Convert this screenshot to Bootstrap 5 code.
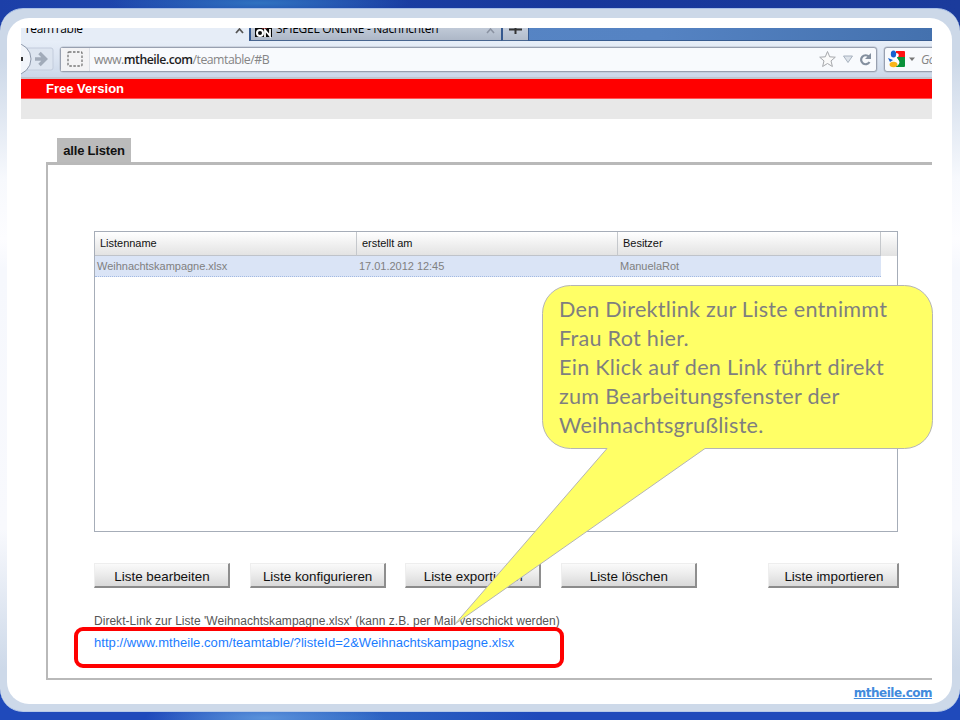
<!DOCTYPE html>
<html lang="de">
<head>
<meta charset="utf-8">
<meta name="viewport" content="width=device-width, initial-scale=1">
<title>TeamTable</title>
<link href="https://cdn.jsdelivr.net/npm/bootstrap@5.3.0/dist/css/bootstrap.min.css" rel="stylesheet">
<style>
body{width:960px;height:720px;font-family:"Liberation Sans",Arial,sans-serif;color:#111}
.slide{width:960px;height:720px;padding:8px 0;background:
 radial-gradient(ellipse 150px 14px at 260px 3px,#2f72c0,transparent),
 radial-gradient(ellipse 120px 20px at 265px 718px,#5b93db,transparent),
 radial-gradient(ellipse 190px 24px at 350px 718px,#2f68c4,transparent),
 linear-gradient(90deg,#1c3fa8,#1e46ac 15%,#17379b 60%,#1b3b9c) 0 0/960px 40px no-repeat,#1f4abb}
.frame{height:704px;border-radius:23px;padding:9px 8px 8px 7px;border-top:1px solid #a9c0e6;border-bottom:1px solid #b5c9e8;
 background:linear-gradient(#ccd8e8 0,#ccd8e8 50px,#f7f9fd 170px,#fdfdff 230px,#f6f8fd 260px,#f8f9fd 520px,#cdd9e9 660px)}
.sheet{height:686px;border-radius:22px;background:#fff;padding:10px 20px 0 14px}
.shot{width:911px;height:652px;overflow:hidden}
.ui{font-family:"Open Sans","Noto Sans",sans-serif}
.tabs{height:13px;font-size:12px;line-height:14px;background:linear-gradient(90deg,#5887c6,#5583c3 70%,#4471ae)}
.tabs svg,.bar svg{flex:none;display:block}
.tabs span{margin-top:-6px;white-space:nowrap;letter-spacing:-.3px;color:#000}
.t1{width:228px;background:#e6edf7;padding-left:3px;padding-right:5px}
.t2{width:252px;background:linear-gradient(#c0c9d7,#adb7c7);border-left:2px solid #35588e;border-bottom:1px solid #48658f;padding-left:4px;padding-right:6px}
.t3{width:27px;background:linear-gradient(#c3ccda,#b2bccb);border-left:2px solid #35588e;border-bottom:1px solid #48658f}
.t4{border-left:1px solid #35588e;border-bottom:1px solid #385c91}
.bar{height:38px;background:linear-gradient(#e7eef8,#dbe4f1 50%,#ccd8e9);border-bottom:2px solid #c2c5cd}
.field{height:25px;background:#f8fafd;border:1px solid #98a0b0;border-radius:3px;box-shadow:0 0 0 .5px #b7bfcc}
.nav-l{width:39px;height:31px}
.addr{width:817px}
.ident{width:29px;background:#f3f3f5;border-right:1px solid #dde0e6}
.url{font-size:12.3px;letter-spacing:-.5px;color:#858585;padding:2px 0 0 4px}
.url b{color:#1d1d1d;font-weight:600}
.search{width:70px;margin-left:7px;margin-right:-22px}
.free{height:20px;background:#f00;border-bottom:1px solid #f55;color:#fff;font-size:13px;font-weight:700;line-height:20px;padding-left:25px;letter-spacing:0}
.strip{height:20px;background:#e8e8e8}
.app{padding:19px 0 0 25px}
.tabname{width:74px;height:24px;margin-left:11px;background:#bbb;font-weight:700;font-size:13px;line-height:25px;letter-spacing:-.2px;text-align:center}
.panel{height:518px;border:solid #b9b9b9;border-width:3px 0 2px 2px;padding:66px 0 0 46px}
.grid{width:804px;height:301px;border:1px solid #a6adb8;font-size:11px}
.ghead{height:24px;background:linear-gradient(#fff,#f0f0f0 50%,#e2e2e2);line-height:23px;color:#111}
.ghead div{border-right:1px solid #c5c8cc;border-bottom:1px solid #bfc3ca;padding-left:5px}
.grow{width:786px;height:22px;background:#dae4f6;border-bottom:1px dotted #a3bae3;border-top:1px dotted #a9bbdb;line-height:20px;color:#808080;margin-top:-1px}
.grow div{padding-left:2px}
.c1{width:262px}.c2{width:261px}.c3{width:263px}
.c1,.c2,.c3{letter-spacing:-.02px}
.acts{margin-top:31px;gap:19.6px}
.abtn{width:136px;height:25px;border-radius:0;border:solid;border-width:1px 2px 2px 1px;border-color:#eee #8e8e8e #8b8b8b #eee;background:linear-gradient(#fafafa,#eee 40%,#d9d9d9);font-size:13.4px;color:#111;padding:0 0 0 1px;line-height:26px}
.acts .imp{width:131px;margin-left:52px}
.direct{font-size:12px;line-height:15px;color:#555;margin-top:26px;letter-spacing:.03px}
.dlink{font-size:13px;line-height:15px;color:#1a7cff;text-decoration:none;margin-top:6px;letter-spacing:.05px}
.hl{left:74px;top:627px;width:490px;height:41px;border:4px solid #f00;border-radius:9px}
.say{left:559px;top:295px;font:21.6px/29px Lato,"Open Sans",sans-serif;letter-spacing:.27px;color:#7f7f7f;white-space:nowrap}
.home{font:700 12px/15px "DejaVu Sans",Verdana,sans-serif;color:#428bdd;letter-spacing:-.5px;margin-top:6px}
</style>
</head>
<body>
<div class="slide position-relative overflow-hidden">
 <div class="frame">
  <main class="sheet">
   <div class="shot">
    <div class="tabs ui d-flex">
     <div class="t1 d-flex justify-content-between overflow-hidden"><span>TeamTable</span><svg width="9" height="8"><path d="M1 5 4.500 1 8 5" fill="none" stroke="#555" stroke-width="1.800"/></svg></div>
     <div class="t2 d-flex overflow-hidden"><svg width="17" height="10"><path fill="#080808" d="M0 0h17v9H0z"/><circle cx="5" cy="5" r="3" fill="none" stroke="#fff" stroke-width="2"/><path d="M10 9V2l5 6V1" fill="none" stroke="#fff" stroke-width="1.800"/><path d="M7 0h5" stroke="#b33"/></svg><span class="ms-1">SPIEGEL ONLINE - Nachrichten</span><svg class="ms-auto" width="9" height="8"><path d="M1 5 4.500 1 8 5" fill="none" stroke="#8b93a2" stroke-width="1.600"/></svg></div>
     <div class="t3"><svg width="25" height="9"><path d="M6 1.500h13M12.500 0v6" stroke="#333" stroke-width="2"/></svg></div>
     <div class="t4 flex-grow-1"></div>
    </div>
    <div class="bar ui d-flex align-items-center overflow-hidden">
     <svg class="nav-l" viewBox="0 0 39 31"><rect x="-2" y="4" width="34" height="22" rx="2" fill="#dde5f0" stroke="#c3ccdc"/><circle cx="-6" cy="15" r="16" fill="#f2f5fa" stroke="#8c97aa"/><path d="M0 13h2v4H0z" fill="#333"/><path d="M14 15h8M18.500 9l6 6-6 6" fill="none" stroke="#a1abb9" stroke-width="3.500"/></svg>
     <div class="field addr d-flex align-items-center">
      <div class="ident h-100 d-flex align-items-center justify-content-center"><svg width="16" height="16"><rect x="1" y="1" width="14" height="14" rx="1" fill="none" stroke="#777" stroke-width="1.300" stroke-dasharray="2.500 1.500"/></svg></div>
      <div class="url">www.<b>mtheile.com</b>/teamtable/#B</div>
      <svg class="ms-auto" width="58" height="21" viewBox="0 0 58 21"><path d="M9.500 2.500l2.200 5.300 5.600.4-4.300 3.700 1.400 5.600-4.900-3-4.900 3L6 11.900 1.700 8.200l5.600-.4z" fill="#fafafa" stroke="#a6a8ac"/><path d="M25.500 7h9L30 13.500z" fill="#dde3ea" stroke="#a8b2bf"/><path d="M51.500 13a4.500 4.500 0 1 1-.5-5.200" fill="none" stroke="#84909f" stroke-width="2.200"/><path d="M53 4v6h-6z" fill="#84909f"/></svg>
     </div>
     <div class="field search d-flex align-items-center overflow-hidden">
      <svg width="32" height="20" viewBox="0 0 32 20"><path d="M11 2h8q1 0 1 1v5h-9z" fill="#f11"/><path d="M11 8h9v9q0 1-1 1h-8z" fill="#0a923a"/><path d="M11 4c4 0 3 4 1 5 4 2 3 6 0 8h-2V4z" fill="#fff"/><path d="M12 8h8v9h-6c3-4-1-5-2-9z" fill="#0a923a"/><ellipse cx="8.500" cy="5" rx="2.700" ry="3.600" fill="#1761cf"/><path d="M3 9l5 2-3 2z" fill="#1761cf"/><ellipse cx="8.500" cy="15.500" rx="3.900" ry="2.700" fill="#f9b51b"/><path d="M24 8.500h6l-3 3.500z" fill="#777"/></svg>
      <i class="url">Google</i>
     </div>
    </div>
    <div class="free">Free Version</div>
    <div class="strip"></div>
    <div class="app">
     <div class="tabname">alle Listen</div>
     <section class="panel">
      <div class="grid">
       <div class="ghead d-flex"><div class="c1">Listenname</div><div class="c2">erstellt am</div><div class="c3">Besitzer</div></div>
       <div class="grow d-flex"><div class="c1">Weihnachtskampagne.xlsx</div><div class="c2">17.01.2012 12:45</div><div class="c3">ManuelaRot</div></div>
      </div>
      <div class="acts d-flex">
       <button class="btn abtn">Liste bearbeiten</button><button class="btn abtn">Liste konfigurieren</button><button class="btn abtn">Liste exportieren</button><button class="btn abtn">Liste löschen</button><button class="btn abtn imp">Liste importieren</button>
      </div>
      <div class="direct">Direkt-Link zur Liste 'Weihnachtskampagne.xlsx' (kann z.B. per Mail verschickt werden)</div>
      <a class="dlink d-block" href="#">http://www.mtheile.com/teamtable/?listeId=2&amp;Weihnachtskampagne.xlsx</a>
     </section>
    </div>
   </div>
   <div class="text-end"><a class="home d-inline-block" href="#">mtheile.com</a></div>
  </main>
 </div>
 <div class="hl position-absolute"></div>
 <svg class="position-absolute top-0 start-0" width="960" height="720"><path d="M570.500 285.500H904.500a28 28 0 0 1 28 28V420.500a28 28 0 0 1-28 28H705L455 624 607 448.500H570.500a28 28 0 0 1-28-28V313.500a28 28 0 0 1 28-28z" fill="#ff6" stroke="#b5b5b5"/></svg>
 <div class="say position-absolute">Den Direktlink zur Liste entnimmt<br>Frau Rot hier.<br>Ein Klick auf den Link führt direkt<br>zum Bearbeitungsfenster der<br>Weihnachtsgrußliste.</div>
</div>
<script src="https://cdn.jsdelivr.net/npm/bootstrap@5.3.0/dist/js/bootstrap.bundle.min.js"></script>
</body>
</html>
